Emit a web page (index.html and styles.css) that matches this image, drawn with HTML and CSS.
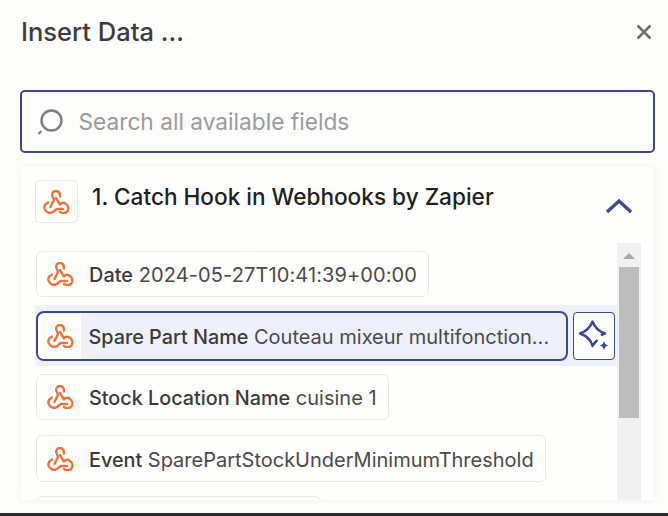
FILE: index.html
```html
<!DOCTYPE html>
<html lang="en">
<head>
<meta charset="utf-8">
<title>Insert Data</title>
<link rel="stylesheet" href="styles.css">
</head>
<body>
<svg class="defs" width="0" height="0" aria-hidden="true">
  <symbol id="hook" viewBox="0 0 27 24">
    <path d="M17 6.500C17 3 15.500 1 13 1 10 1 8.500 3.500 9.500 6c.5 2 2 3 1 5l-3 6"/>
    <path d="M5 12.500C2 14 1 16 1.500 18.500c1 3.500 4.500 5 7.500 4 2-.8 3-3 5-3.500h6"/>
    <path d="M13 8l4 6.500c1.500-1.700 4-2 6-.5 3 2 3 6 1 8-2 1.500-5 1.500-7 0"/>
  </symbol>
</svg>
<main class="dialog">
  <header class="head">
    <h1 class="title">Insert Data ...</h1>
    <svg class="close" viewBox="0 0 16 16"><path d="M1.500 1.500l13 13M14.500 1.500l-13 13"/></svg>
  </header>
  <div class="search">
    <svg class="search-icon" viewBox="0 0 26 27"><circle cx="14.500" cy="12.500" r="10"/><path d="M1.500 26l3-3"/></svg>
    <span class="placeholder">Search all available fields</span>
  </div>
  <section class="panel">
    <div class="app">
      <span class="app-icon"><svg class="hook"><use href="#hook"/></svg></span>
      <h2 class="app-name">1. Catch Hook in Webhooks by Zapier</h2>
      <svg class="chevron" viewBox="0 0 28 16"><path d="M2 14L14 3l12 11"/></svg>
    </div>
    <div class="body">
      <div class="list">
        <div class="row">
          <div class="chip"><svg class="hook"><use href="#hook"/></svg><span class="text text-date"><b>Date</b> 2024-05-27T10:41:39+00:00</span></div>
        </div>
        <div class="row row-active">
          <div class="chip chip-active"><span class="icon-bg"><svg class="hook"><use href="#hook"/></svg></span><span class="text"><b>Spare Part Name</b> Couteau mixeur multifonction...</span></div>
          <button class="spark" type="button" aria-label="AI">
            <svg viewBox="0 0 34 34"><path d="M20.500 21c-2 1.500-3.500 3.500-5 6C14 21 10 17 3 14.500 9 12.500 13 9 15.500 2.500 18 9 22 12.500 28 14.500c-1.500.5-3 1.200-4 2"/><path class="fill" d="M27 21.500c.6 3 1.600 4.400 5 5-3.400.6-4.400 2-5 5-.6-3-1.600-4.400-5-5 3.400-.6 4.400-2 5-5z"/></svg>
          </button>
        </div>
        <div class="row row-3">
          <div class="chip"><svg class="hook"><use href="#hook"/></svg><span class="text"><b>Stock Location Name</b> cuisine 1</span></div>
        </div>
        <div class="row">
          <div class="chip chip-tall"><svg class="hook"><use href="#hook"/></svg><span class="text"><b>Event</b> SparePartStockUnderMinimumThreshold</span></div>
        </div>
        <div class="row">
          <div class="chip chip-cut"></div>
        </div>
      </div>
      <div class="scrollbar">
        <span class="arrow"></span>
        <span class="thumb"></span>
      </div>
    </div>
  </section>
</main>
<div class="taskbar"></div>
</body>
</html>
```
FILE: styles.css
```css
* { box-sizing: border-box; }
html, body { margin: 0; height: 516px; overflow: hidden; }
body {
  background: #fdfdfb;
  font-family: Inter, "Liberation Sans", sans-serif;
  color: #3b3b3b;
  display: flex;
  flex-direction: column;
}
.defs { position: absolute; }
.dialog {
  height: 513px;
  padding: 0 13px 0 20px;
  display: flex;
  flex-direction: column;
  overflow: hidden;
}
.head {
  height: 90px;
  padding: 17px 3px 0 1px;
  display: flex;
  justify-content: space-between;
  align-items: flex-start;
}
.title { margin: 0; font-size: 25.500px; line-height: 30px; font-weight: 500; color: #3d3c3b; }
.close { width: 16px; height: 16px; margin-top: 7px; fill: none; stroke: #6f6f6e; stroke-width: 2.600; }
.search {
  height: 63px;
  border: 2.500px solid #3f4790;
  border-radius: 5px;
  display: flex;
  align-items: center;
  padding: 0 0 0 14.500px;
  gap: 16px;
}
.search-icon { width: 26px; height: 27px; fill: none; stroke: #808080; stroke-width: 2.400; flex: none; }
.placeholder { font-size: 22.700px; line-height: 28px; color: #9b9b9b; }
.panel {
  margin: 14px 1px 0;
  height: 333px;
  display: flex;
  flex-direction: column;
  box-shadow: 0 0 7px rgba(0,0,0,.06);
  background: #fefefc;
}
.app {
  height: 76px;
  padding: 13px 21px 0 14px;
  display: flex;
  align-items: flex-start;
  flex: none;
}
.app-icon {
  width: 43px; height: 43px;
  border: 1px solid #e9e8e4;
  border-radius: 4px;
  display: flex; align-items: center; justify-content: center;
  flex: none;
}
.app-name { margin: 2px 0 0 14px; font-size: 22.600px; line-height: 30px; font-weight: 500; color: #1f1f1f; flex: 1; white-space: nowrap; }
.chevron { width: 28px; height: 16px; margin-top: 18px; fill: none; stroke: #3f4790; stroke-width: 3.400; flex: none; }
.hook { width: 27px; height: 24px; fill: none; stroke: #e9743c; stroke-width: 2.400; stroke-linecap: round; stroke-linejoin: round; flex: none; }
.body { flex: 1; display: flex; min-height: 0; padding-right: 13px; }
.list { flex: 1; min-width: 0; display: flex; flex-direction: column; padding-top: 8px; overflow: hidden; }
.row { flex: none; display: flex; align-items: center; padding-left: 15px; margin-bottom: 14px; }
.row-3 { margin-bottom: 15px; }
.row-active {
  background: #eff1fa;
  margin: -6px 0 8px 14px;
  padding: 6px 0 5px 1px;
  gap: 5px;
}
.chip {
  height: 46px;
  display: inline-flex;
  align-items: center;
  border: 1px solid #e9e8e4;
  border-radius: 6px;
  background: #fefefc;
  padding: 0 11px 0 10px;
  gap: 15px;
}
.chip-tall { height: 47px; }
.chip-active {
  height: 50px;
  width: 532px;
  background: #eff1fa;
  border: 2.500px solid #3f4790;
  border-radius: 8px;
  padding: 0 16px 0 0;
  gap: 0;
}
.icon-bg {
  width: 43px; height: 45px;
  background: #fefefc;
  border-radius: 6px 0 0 6px;
  display: flex; align-items: center;
  padding-left: 8.500px;
  margin-right: 7.500px;
  flex: none;
}
.chip-cut { width: 285px; height: 46px; }
.text { font-size: 20px; line-height: 26px; padding-top: 2px; color: #4a4a4a; white-space: nowrap; }
.text-date { letter-spacing: .1px; }
.text b { font-size: 19.800px; font-weight: 500; color: #3a3a3a; }
.spark {
  width: 42px; height: 48px;
  padding: 0;
  border: 1.500px solid #3f4790;
  border-radius: 4px;
  background: #fefefc;
  display: flex; align-items: center; justify-content: center;
  flex: none;
}
.spark svg { width: 34px; height: 34px; fill: none; stroke: #3f4790; stroke-width: 2.400; stroke-linejoin: round; }
.spark .fill { fill: #3f4790; stroke: none; }
.scrollbar {
  width: 24px;
  flex: none;
  background: #f1f1f1;
  display: flex;
  flex-direction: column;
  align-items: center;
  padding-top: 10px;
}
.arrow { width: 0; height: 0; border-left: 6px solid transparent; border-right: 6px solid transparent; border-bottom: 6px solid #a9a9a9; margin-bottom: 8px; }
.thumb { width: 20px; height: 151px; background: #bdbdbd; }
.taskbar { height: 3px; background: #2b2b2b; flex: none; }
```
